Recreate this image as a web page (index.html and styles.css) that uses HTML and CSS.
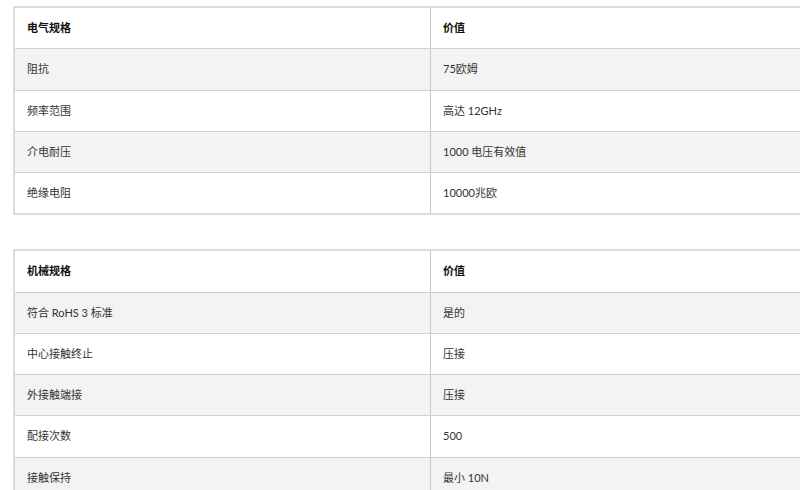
FILE: index.html
```html
<!DOCTYPE html>
<html lang="zh">
<head>
<meta charset="utf-8">
<link rel="stylesheet" href="styles.css">
</head>
<body>
<div class="page">
  <table class="spec">
    <thead>
      <tr><th class="c1">电气规格</th><th>价值</th></tr>
    </thead>
    <tbody>
      <tr><td class="c1">阻抗</td><td>75欧姆</td></tr>
      <tr><td class="c1">频率范围</td><td>高达 12GHz</td></tr>
      <tr><td class="c1">介电耐压</td><td>1000 电压有效值</td></tr>
      <tr><td class="c1">绝缘电阻</td><td>10000兆欧</td></tr>
    </tbody>
  </table>
  <table class="spec">
    <thead>
      <tr><th class="c1">机械规格</th><th>价值</th></tr>
    </thead>
    <tbody>
      <tr><td class="c1">符合 RoHS 3 标准</td><td>是的</td></tr>
      <tr><td class="c1">中心接触终止</td><td>压接</td></tr>
      <tr><td class="c1">外接触端接</td><td>压接</td></tr>
      <tr><td class="c1">配接次数</td><td>500</td></tr>
      <tr><td class="c1">接触保持</td><td>最小 10N</td></tr>
    </tbody>
  </table>
</div>
</body>
</html>
```
FILE: styles.css
```css
html, body {
  margin: 0;
  padding: 0;
  background: #fff;
}
body {
  font-family: Lato, "Noto Sans CJK SC", sans-serif;
  font-size: 11px;
  color: #333;
  overflow: hidden;
}
.page {
  padding: 6px 0 0 13px;
  display: flex;
  flex-direction: column;
  gap: 34px;
  width: 820px;
}
.spec {
  width: 820px;
  border-collapse: collapse;
  border: 2px solid #dcdcdc;
  border-right: none;
}
.spec th, .spec td {
  text-align: left;
  padding: 14px 12px;
  line-height: 12.25px;
  border-bottom: 1px solid #d0d0d0;
  white-space: nowrap;
}
.spec th {
  font-weight: bold;
  color: #111;
}
.spec .c1 {
  width: 391px;
  border-right: 1px solid #c8c8c8;
}
.spec tbody tr:nth-child(odd) {
  background: #f3f3f3;
}
.spec tbody tr:last-child td {
  border-bottom: none;
}
```
